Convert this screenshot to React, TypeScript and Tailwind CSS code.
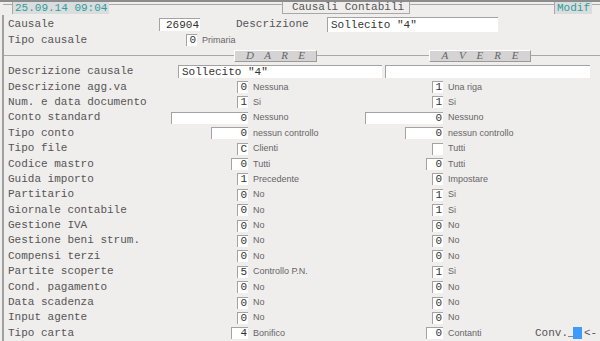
import React from 'react';

type Row = {
  label: string;
  dare: string;
  dareW: string;
  dareDesc: string;
  avere: string;
  avereW: string;
  avereDesc: string;
};

const rows: Row[] = [
  { label: 'Descrizione agg.va', dare: '0', dareW: 'w-[11px]', dareDesc: 'Nessuna', avere: '1', avereW: 'w-[11px]', avereDesc: 'Una riga' },
  { label: 'Num. e data documento', dare: '1', dareW: 'w-[11px]', dareDesc: 'Si', avere: '1', avereW: 'w-[11px]', avereDesc: 'Si' },
  { label: 'Conto standard', dare: '0', dareW: 'w-[77px]', dareDesc: 'Nessuno', avere: '0', avereW: 'w-[78px]', avereDesc: 'Nessuno' },
  { label: 'Tipo conto', dare: '0', dareW: 'w-[37px]', dareDesc: 'nessun controllo', avere: '0', avereW: 'w-[38px]', avereDesc: 'nessun controllo' },
  { label: 'Tipo file', dare: 'C', dareW: 'w-[11px]', dareDesc: 'Clienti', avere: '', avereW: 'w-[11px]', avereDesc: 'Tutti' },
  { label: 'Codice mastro', dare: '0', dareW: 'w-[17px]', dareDesc: 'Tutti', avere: '0', avereW: 'w-[17px]', avereDesc: 'Tutti' },
  { label: 'Guida importo', dare: '1', dareW: 'w-[11px]', dareDesc: 'Precedente', avere: '0', avereW: 'w-[11px]', avereDesc: 'Impostare' },
  { label: 'Partitario', dare: '0', dareW: 'w-[11px]', dareDesc: 'No', avere: '1', avereW: 'w-[11px]', avereDesc: 'Si' },
  { label: 'Giornale contabile', dare: '0', dareW: 'w-[11px]', dareDesc: 'No', avere: '1', avereW: 'w-[11px]', avereDesc: 'Si' },
  { label: 'Gestione IVA', dare: '0', dareW: 'w-[11px]', dareDesc: 'No', avere: '0', avereW: 'w-[11px]', avereDesc: 'No' },
  { label: 'Gestione beni strum.', dare: '0', dareW: 'w-[11px]', dareDesc: 'No', avere: '0', avereW: 'w-[11px]', avereDesc: 'No' },
  { label: 'Compensi terzi', dare: '0', dareW: 'w-[11px]', dareDesc: 'No', avere: '0', avereW: 'w-[11px]', avereDesc: 'No' },
  { label: 'Partite scoperte', dare: '5', dareW: 'w-[11px]', dareDesc: 'Controllo P.N.', avere: '1', avereW: 'w-[11px]', avereDesc: 'Si' },
  { label: 'Cond. pagamento', dare: '0', dareW: 'w-[11px]', dareDesc: 'No', avere: '0', avereW: 'w-[11px]', avereDesc: 'No' },
  { label: 'Data scadenza', dare: '0', dareW: 'w-[11px]', dareDesc: 'No', avere: '0', avereW: 'w-[11px]', avereDesc: 'No' },
  { label: 'Input agente', dare: '0', dareW: 'w-[11px]', dareDesc: 'No', avere: '0', avereW: 'w-[11px]', avereDesc: 'No' },
];

const mono = "font-['Liberation_Mono','Courier_New',monospace]";
const sans = "font-['Liberation_Sans',Arial,sans-serif]";
const box = 'h-[12px] bg-white border-t border-l border-[#a3a3a3] flex items-center justify-end pr-[1px] text-[11px] leading-none text-[#333]';
const desc = `pl-[5px] text-[9px] text-[#666] leading-none ${sans}`;
const header = "h-[12px] bg-[#d5d3d3] border-t border-l border-white border-r border-b border-r-[#9a9a9a] border-b-[#9a9a9a] flex items-center justify-around px-[6px] font-['Liberation_Serif',serif] italic text-[11px] text-[#666]";

function Field({ value, w }: { value: string; w: string }) {
  return <div className={`${box} ${w}`}>{value}</div>;
}

export default function App() {
  return (
    <div className={`w-[600px] h-[341px] overflow-hidden bg-[#f0eded] flex flex-col ${mono}`}>
      <div className="h-[2px] bg-[#8c8c8c]" />

      {/* title strip */}
      <div className="flex h-[13px] text-[11px] leading-none">
        <div className="w-[3px]" />
        <div className="w-[9px] h-px bg-[#a8a8a8] mt-[2px]" />
        <div className="w-[97px] h-[12px] bg-[#d9dddd] border-l border-[#a8a8a8] text-[#2f9c9c] flex items-center pl-[2px] whitespace-nowrap">25.09.14 09:04</div>
        <div className="w-[173px] h-px bg-[#a8a8a8] mt-[2px]" />
        <div className="w-[128px] h-[12px] border-l border-r border-b border-[#a8a8a8] text-[#555] flex items-center justify-center pl-[4px] whitespace-nowrap">Causali Contabili</div>
        <div className="flex-1 h-px bg-[#a8a8a8] mt-[2px]" />
        <div className="w-[38px] h-[12px] bg-[#d9dddd] border-l border-[#a8a8a8] text-[#2f9c9c] flex items-center pl-[2px]">Modif</div>
        <div className="w-[8px] h-px bg-[#a8a8a8] mt-[2px]" />
      </div>

      <div className="flex-1 flex flex-col ml-[2px] border-l-2 border-[#a0a0a0] text-[#555] text-[11px] leading-none">
        {/* Causale */}
        <div className="flex items-center h-[16px] mt-[2px]">
          <div className="w-[155px] pl-[4px]">Causale</div>
          <div className={`${box} w-[41px] h-[13px]`}>26904</div>
          <div className="w-[36px]" />
          <div className="w-[91px]">Descrizione</div>
          <div className="w-[171px] h-[15px] bg-white border-t border-l border-[#a3a3a3] flex items-center pl-[3px] text-[#333]">Sollecito "4"</div>
        </div>
        {/* Tipo causale */}
        <div className="flex items-center h-[15px]">
          <div className="w-[182px] pl-[4px]">Tipo causale</div>
          <Field value="0" w="w-[11px]" />
          <div className={`${desc} pl-[3px]`}>Primaria</div>
        </div>

        {/* DARE / AVERE separator */}
        <div className="flex items-center h-[16px]">
          <div className="w-[230px] h-px bg-[#a8a8a8]" />
          <div className={`w-[83px] ${header}`}>
            <span>D</span><span>A</span><span>R</span><span>E</span>
          </div>
          <div className="w-[112px] h-px bg-[#a8a8a8]" />
          <div className={`w-[102px] ${header}`}>
            <span>A</span><span>V</span><span>E</span><span>R</span><span>E</span>
          </div>
          <div className="flex-1 h-px bg-[#a8a8a8]" />
        </div>

        <div className="flex flex-col">
          {/* Descrizione causale */}
          <div className="flex items-center h-[15.4px]">
            <div className="w-[164px] pl-[4px]">Descrizione causale</div>
            <div className="ml-[10px] w-[204px] h-[13px] bg-white border-t border-l border-[#a3a3a3] flex items-center pl-[3px] text-[#333]">Sollecito "4"</div>
            <div className="ml-[3px] w-[205px] h-[13px] bg-white border-t border-l border-[#a3a3a3]" />
          </div>

          {rows.map((r) => (
            <div key={r.label} className="flex items-center h-[15.4px]">
              <div className="w-[164px] pl-[4px]">{r.label}</div>
              <div className="w-[80px] flex justify-end">
                <Field value={r.dare} w={r.dareW} />
              </div>
              <div className={`w-[117px] ${desc}`}>{r.dareDesc}</div>
              <div className="w-[78px] flex justify-end">
                <Field value={r.avere} w={r.avereW} />
              </div>
              <div className={`flex-1 ${desc}`}>{r.avereDesc}</div>
            </div>
          ))}

          {/* Tipo carta */}
          <div className="flex items-center h-[15.4px]">
            <div className="w-[164px] pl-[4px]">Tipo carta</div>
            <div className="w-[80px] flex justify-end">
              <Field value="4" w="w-[17px]" />
            </div>
            <div className={`w-[117px] ${desc}`}>Bonifico</div>
            <div className="w-[78px] flex justify-end">
              <Field value="0" w="w-[17px]" />
            </div>
            <div className={`w-[92px] ${desc}`}>Contanti</div>
            <div className="text-[#555]">Conv.</div>
            <div className="w-[5px] h-px bg-[#888] mt-[6px]" />
            <div className="w-[9px] h-[12px] bg-[#3d9bff]" />
            <div className="pl-[2px] text-[#555]">&lt;-</div>
          </div>
        </div>
      </div>
    </div>
  );
}
